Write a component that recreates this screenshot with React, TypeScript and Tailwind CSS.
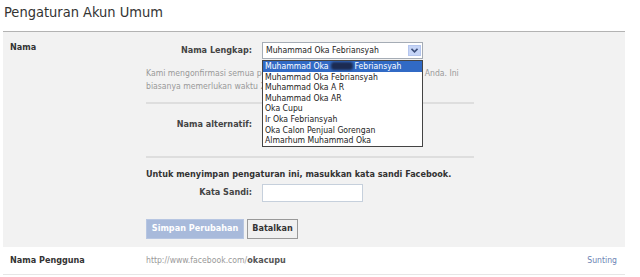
import React from "react";

const font = { fontFamily: '"DejaVu Sans Condensed", "DejaVu Sans", Tahoma, sans-serif' };

const options = [
  "Muhammad Oka Febriansyah",
  "Muhammad Oka A R",
  "Muhammad Oka AR",
  "Oka Cupu",
  "Ir Oka Febriansyah",
  "Oka Calon Penjual Gorengan",
  "Almarhum Muhammad Oka",
];

export default function App() {
  return (
    <div className="w-[640px] h-[277px] bg-white overflow-hidden text-[9px] text-[#333]" style={font}>
      <div className="h-[31px] pl-[4px] pt-[3px] text-[14.5px] leading-[18px] text-[#333]">Pengaturan Akun Umum</div>
      <div className="ml-[3px] w-[622px] h-[216px] border-t border-[#b3b3b3] bg-[#f2f2f2] flex">
        <div className="w-[143px] pl-[7px] pt-[9px] font-bold leading-[12px]">Nama</div>
        <div className="w-[328px] flex flex-col">
          <div className="mt-[10px] h-[17px] flex items-center">
            <div className="w-[106px] text-right font-bold text-[#444]">Nama Lengkap:</div>
            <div className="ml-[10px] relative w-[161px] h-[17px]">
              <div className="w-full h-full border border-[#a5acb5] bg-white flex items-center pl-[3px] text-[8.6px] text-[#222]">
                <span className="flex-1">Muhammad Oka Febriansyah</span>
                <div className="w-[13px] h-[11px] mr-[1px] bg-[#c6d5f7] border border-[#b5c6ee] flex items-center justify-center">
                  <svg width="7" height="5" viewBox="0 0 7 5">
                    <path d="M0.5 0.8 L3.5 3.8 L6.5 0.8" stroke="#3d4f7a" strokeWidth="1.6" fill="none" />
                  </svg>
                </div>
              </div>
              <div className="absolute left-0 top-[18px] w-[161px] border border-[#444] bg-white text-[8.6px] leading-[10.6px] text-[#222] z-10">
                <div className="bg-[#316ac5] text-white pl-[2px] flex items-center">
                  Muhammad Oka
                  <span className="inline-block w-[22px] h-[8px] mx-[2px] bg-[#1c2b52] rounded-[3px] blur-[1px]" />
                  Febriansyah
                </div>
                {options.map((o) => (
                  <div key={o} className="pl-[2px]">{o}</div>
                ))}
              </div>
            </div>
          </div>
          <div className="mt-[8px] text-[8.6px] leading-[13px] text-[#999] whitespace-nowrap">
            Kami mengonfirmasi semua perubahan nama untuk memastikan nama Anda. Ini
            <br />
            biasanya memerlukan waktu 24 jam.
          </div>
          <div className="mt-[9px] h-[2px] bg-[#dedede]" />
          <div className="mt-[11px] h-[20px] flex items-center">
            <div className="w-[106px] text-right font-bold text-[#444]">Nama alternatif:</div>
          </div>
          <div className="mt-[21px] h-[2px] bg-[#dedede]" />
          <div className="mt-[9px] leading-[14px] font-bold text-[#333] whitespace-nowrap">
            Untuk menyimpan pengaturan ini, masukkan kata sandi Facebook.
          </div>
          <div className="mt-[3px] h-[18px] flex items-center">
            <div className="w-[106px] text-right font-bold text-[#444]">Kata Sandi:</div>
            <div className="ml-[10px] w-[101px] h-[18px] bg-white border border-[#c6d0dc]" />
          </div>
          <div className="mt-[17px] flex gap-[3px]">
            <div className="w-[98px] h-[20px] bg-[#a8badb] border border-[#b7c6e2] text-white font-bold flex items-center justify-center">
              Simpan Perubahan
            </div>
            <div className="w-[51px] h-[20px] bg-[#f0f0f0] border border-[#999] text-[#333] font-bold flex items-center justify-center">
              Batalkan
            </div>
          </div>
        </div>
      </div>
      <div className="ml-[3px] w-[622px] h-[28px] border-b border-[#e6e6e6] flex items-center">
        <div className="w-[143px] pl-[7px] font-bold text-[#333]">Nama Pengguna</div>
        <div className="flex-1 text-[8.6px] text-[#999]">
          http://www.facebook.com/<span className="font-bold text-[9px] text-[#555]">okacupu</span>
        </div>
        <div className="pr-[8px] text-[8.6px] text-[#6d84b4]">Sunting</div>
      </div>
    </div>
  );
}
